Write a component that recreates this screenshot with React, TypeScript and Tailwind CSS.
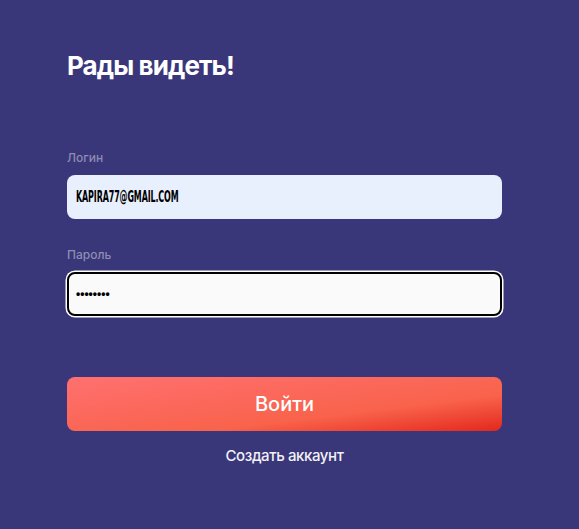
import React from "react";

export default function App() {
  return (
    <div className="min-h-[529px] w-full bg-[#393779] pl-[67px] pt-[50px] font-['Inter',sans-serif]">
      <div className="flex w-[435px] flex-col">
        <h1 className="text-[26px] leading-[32px] font-bold text-white tracking-[-0.9px]">Рады видеть!</h1>

        <label className="mt-[68px] mb-[9px] text-[12px] leading-[16px] font-medium text-[#8f8cb3]">Логин</label>
        <div className="flex h-[44px] items-center rounded-[8px] bg-[#e8f0fe] pl-[9px]">
          <span className="inline-block origin-left scale-x-[0.59] font-['DejaVu_Sans_Condensed','DejaVu_Sans',sans-serif] text-[15px] font-bold uppercase leading-none tracking-[-0.2px] text-black">
            kapira77@gmail.com
          </span>
        </div>

        <label className="mt-[28px] mb-[9px] text-[12px] leading-[16px] font-medium text-[#8f8cb3]">Пароль</label>
        <div className="flex h-[44px] items-center rounded-[8px] border-2 border-black bg-[#fafafa] pl-[7px] shadow-[0_0_0_1.5px_#ffffff]">
          <span className="font-['Liberation_Sans',sans-serif] text-[12px] font-bold leading-none text-black">••••••••</span>
        </div>

        <button className="mt-[61px] flex h-[54px] items-center justify-center rounded-[8px] bg-[linear-gradient(to_bottom_right,#ff7070_0%,#f9634c_66%,#e3281e_100%)] text-[20px] font-medium text-white">
          Войти
        </button>

        <a className="mt-[15px] self-center text-[15px] leading-[20px] font-medium tracking-[-0.4px] text-[#f2f1f8]">Создать аккаунт</a>
      </div>
    </div>
  );
}
